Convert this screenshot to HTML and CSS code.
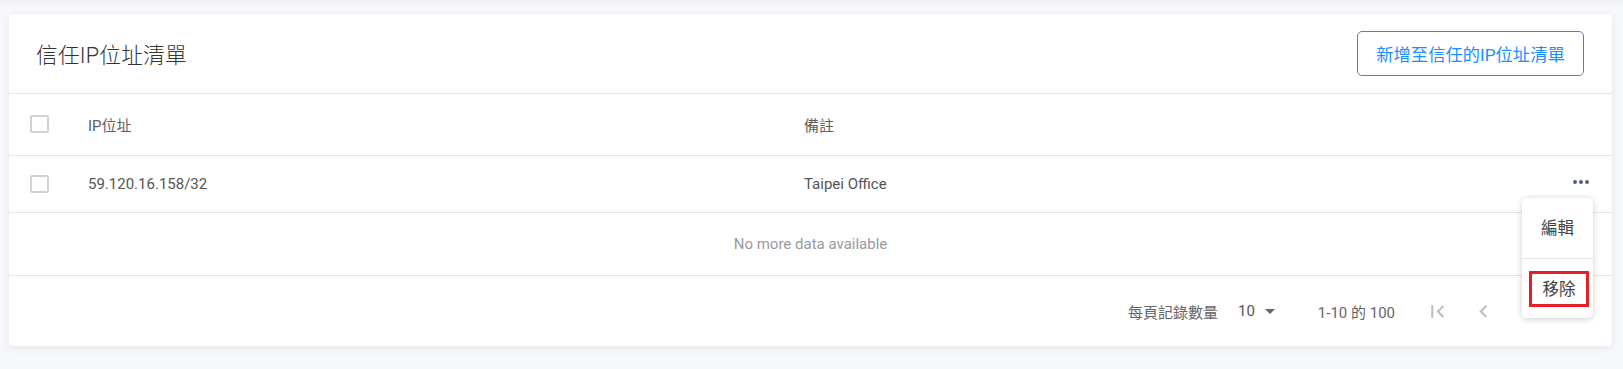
FILE: index.html
```html
<!DOCTYPE html>
<html lang="zh-Hant">
<head>
<meta charset="utf-8">
<link rel="stylesheet" href="styles.css">
</head>
<body>
<div class="topshade"></div>
<div class="card">
  <div class="card-head">
    <h1 class="title">信任IP位址清單</h1>
    <button class="btn-add">新增至信任的IP位址清單</button>
  </div>
  <div class="row row-head">
    <div class="cell cell-check"><span class="checkbox"></span></div>
    <div class="cell">IP位址</div>
    <div class="cell">備註</div>
    <div class="cell cell-act"></div>
  </div>
  <div class="row row-data">
    <div class="cell cell-check"><span class="checkbox"></span></div>
    <div class="cell">59.120.16.158/32</div>
    <div class="cell">Taipei Office</div>
    <div class="cell cell-act"><span class="dots"><i></i><i></i><i></i></span></div>
  </div>
  <div class="row-empty">No more data available</div>
  <div class="pager">
    <span class="pager-label">每頁記錄數量</span>
    <span class="pager-size">10<span class="caret"></span></span>
    <span class="pager-range">1-10 的 100</span>
    <span class="pager-icons">
      <svg class="pi" viewBox="0 0 24 24"><path d="M18.41 16.59L13.82 12l4.59-4.59L17 6l-6 6 6 6zM6 6h2v12H6z"/></svg>
      <svg class="pi" viewBox="0 0 24 24"><path d="M15.41 7.41L14 6l-6 6 6 6 1.41-1.41L10.83 12z"/></svg>
      <svg class="pi" viewBox="0 0 24 24"><path d="M8.59 16.59L13.17 12 8.59 7.41 10 6l6 6-6 6z"/></svg>
      <svg class="pi" viewBox="0 0 24 24"><path d="M5.59 7.41L10.18 12l-4.59 4.59L7 18l6-6-6-6zM16 6h2v12h-2z"/></svg>
    </span>
  </div>
  <div class="menu">
    <div class="menu-item">編輯</div>
    <div class="menu-item"><span class="hl">移除</span></div>
  </div>
</div>
</body>
</html>
```
FILE: styles.css
```css
html, body {
  margin: 0;
  padding: 0;
}
body {
  background: #f7f8fc;
  font-family: Roboto, "Noto Sans CJK TC", sans-serif;
  width: 1623px;
  height: 369px;
  overflow: hidden;
  position: relative;
}
.topshade {
  height: 6px;
  background: linear-gradient(#eff0f4, #f7f8fc);
}
.card {
  position: relative;
  margin: 8px 11px 0 9px;
  background: #fff;
  border-radius: 4px;
  box-shadow: 0 2px 8px rgba(0, 0, 0, 0.08);
  height: 332px;
}
.card-head {
  display: flex;
  align-items: center;
  justify-content: space-between;
  height: 79px;
  padding: 0 28px 0 27px;
  border-bottom: 1px solid #e6e6e6;
}
.title {
  margin: 0;
  font-size: 21.7px;
  font-weight: 300;
  color: #333;
  font-family: Roboto, "Noto Sans CJK TC", sans-serif;
  letter-spacing: 0.2px;
}
.btn-add {
  width: 227px;
  height: 45px;
  border: 1px solid #1a90ff;
  border-radius: 5px;
  background: #fff;
  color: #1890ff;
  font-size: 17.3px;
  font-family: Roboto, "Noto Sans CJK TC", sans-serif;
  padding: 0;
}
.row {
  display: grid;
  grid-template-columns: 79px 716px 1fr 60px;
  align-items: center;
  border-bottom: 1px solid #e6e6e6;
  font-size: 15px;
  color: #555;
}
.row-head {
  height: 61px;
  color: #5f5f5f;
}
.row-data {
  height: 56px;
}
.cell-check {
  padding-left: 21px;
  display: flex;
}
.checkbox {
  display: block;
  width: 15px;
  height: 14px;
  border: 2px solid #d2d2d2;
  border-radius: 2px;
}
.row-head .checkbox { margin-top: -2px; }
.row-data .checkbox { margin-top: -1px; }
.cell-act {
  display: flex;
  justify-content: flex-end;
  padding-right: 23px;
}
.dots {
  display: flex;
  gap: 2px;
  margin-top: -4px;
}
.dots i {
  display: block;
  width: 4px;
  height: 4px;
  border-radius: 50%;
  background: #4b6384;
}
.row-empty {
  height: 62px;
  display: flex;
  align-items: center;
  justify-content: center;
  border-bottom: 1px solid #e6e6e6;
  color: #9a9a9a;
  font-size: 15px;
}
.pager {
  height: 70px;
  display: flex;
  align-items: center;
  justify-content: flex-end;
  padding-right: 24px;
  font-size: 15px;
  color: #666;
}
.pager-label {
  font-size: 15px;
  margin-right: 20px;
}
.pager-size {
  display: flex;
  align-items: center;
  font-size: 15px;
  color: #555;
}
.caret {
  display: block;
  width: 0;
  height: 0;
  border-left: 5px solid transparent;
  border-right: 5px solid transparent;
  border-top: 5px solid #666;
  margin-left: 10px;
}
.pager-range {
  margin-left: 43px;
  color: #666;
}
.pager-icons {
  display: flex;
  align-items: center;
  gap: 21px;
  margin-left: 30px;
}
.pi {
  width: 25px;
  height: 25px;
  fill: #bdbdbd;
}
.menu {
  position: absolute;
  left: 1513px;
  top: 184px;
  width: 71px;
  background: #fff;
  border-radius: 5px;
  box-shadow: 0 1px 6px rgba(0, 0, 0, 0.2);
}
.menu-item {
  height: 60px;
  display: flex;
  align-items: center;
  justify-content: center;
  font-size: 16.5px;
  color: #444;
}
.menu-item:first-child {
  padding-bottom: 2px;
  height: 58px;
}
.menu-item + .menu-item {
  border-top: 1px solid #e6e6e6;
  height: 59px;
}
.hl {
  display: flex;
  align-items: center;
  justify-content: center;
  width: 54px;
  height: 30px;
  padding-bottom: 2px;
  height: 28px;
  border: 3px solid #e5202b;
  margin-left: 3px;
  margin-top: 0px;
}
```
